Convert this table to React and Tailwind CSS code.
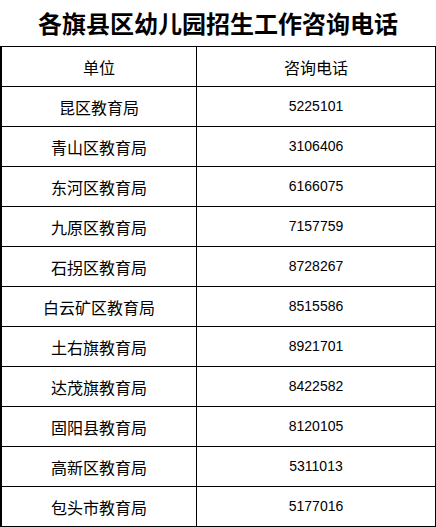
import React from "react";

const rows = [
  ["昆区教育局", "5225101"],
  ["青山区教育局", "3106406"],
  ["东河区教育局", "6166075"],
  ["九原区教育局", "7157759"],
  ["石拐区教育局", "8728267"],
  ["白云矿区教育局", "8515586"],
  ["土右旗教育局", "8921701"],
  ["达茂旗教育局", "8422582"],
  ["固阳县教育局", "8120105"],
  ["高新区教育局", "5311013"],
  ["包头市教育局", "5177016"],
];

const cell = "h-[40px] flex items-center justify-center border-b border-black";
const cjk = "font-['Noto_Sans_CJK_SC','Liberation_Sans',sans-serif] text-[16px]";
const num = "font-['Liberation_Sans','Noto_Sans_CJK_SC',sans-serif] text-[14px]";

export default function App() {
  return (
    <div className="w-[436px] h-[527px] bg-white text-black overflow-hidden">
      {/* 标题 */}
      <div className="h-[46px] flex items-center justify-center text-[24px] font-bold leading-none font-['Noto_Sans_CJK_SC',sans-serif]">
        各旗县区幼儿园招生工作咨询电话
      </div>

      {/* 表格 */}
      <div className="grid grid-cols-[195px_1fr] border-t border-l-2 border-r border-black">
        <div className={`${cell} border-r ${cjk}`}>单位</div>
        <div className={`${cell} ${cjk}`}>咨询电话</div>
        {rows.map(([unit, phone]) => (
          <React.Fragment key={unit}>
            <div className={`${cell} border-r ${cjk}`}>{unit}</div>
            <div className={`${cell} ${num}`}>{phone}</div>
          </React.Fragment>
        ))}
      </div>
    </div>
  );
}
